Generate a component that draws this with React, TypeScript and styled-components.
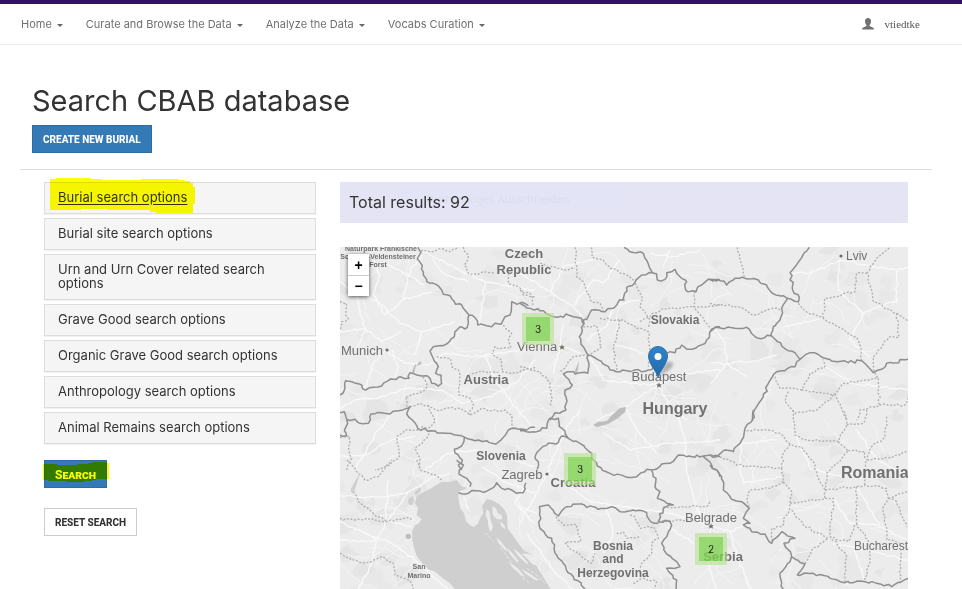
import React from 'react';
import styled, { createGlobalStyle } from 'styled-components';

const sans = `Inter, "Open Sans", "Liberation Sans", sans-serif`;
const buttonFont = `Roboto, "Liberation Sans", sans-serif`;

const GlobalStyle = createGlobalStyle`
  *, *::before, *::after { box-sizing: border-box; }
  html { overflow: hidden; }
  body { margin: 0; background: #fff; color: #333; font-family: ${sans}; }
`;

const Page = styled.div`
  display: flex;
  flex-direction: column;
  height: 100vh;
  overflow: hidden;
`;

const Navbar = styled.nav`
  display: flex;
  align-items: center;
  justify-content: space-between;
  flex: none;
  height: 45px;
  padding: 0 42px 0 21px;
  border-top: 4px solid #321067;
  border-bottom: 1px solid #ebebeb;
`;

const NavGroup = styled.div`
  display: flex;
  gap: 23px;
`;

const NavButton = styled.button`
  display: flex;
  align-items: center;
  gap: 5px;
  padding: 0;
  border: 0;
  background: none;
  color: #707070;
  font: 11px/16px ${sans};
  white-space: nowrap;
`;

const Caret = styled.span`
  border: 3px solid transparent;
  border-top-color: #666;
  border-bottom: 0;
  margin-top: 3px;
`;

const UserLink = styled.a`
  display: flex;
  align-items: center;
  gap: 11px;
  color: #555;
  text-decoration: none;
  font: 11px/16px "Liberation Serif", serif;
`;

const Main = styled.main`
  display: flex;
  flex-direction: column;
  flex: 1;
  min-height: 0;
  padding: 37px 30px 0 20px;
`;

const PageHeader = styled.header`
  flex: none;
  padding: 0 12px 16px;
  border-bottom: 1px solid #ddd;
`;

const Title = styled.h1`
  margin: 0 0 6px;
  font: 400 29px/37px ${sans};
`;

const ActionButton = styled.button<{ $primary?: boolean }>`
  display: block;
  height: 28px;
  padding: 1px 10px 0;
  border: 1px solid ${p => (p.$primary ? '#2e6da4' : '#ccc')};
  background: ${p => (p.$primary ? '#337ab7' : '#fff')};
  color: ${p => (p.$primary ? '#fff' : '#333')};
  font: 800 10px/14px ${buttonFont};
  white-space: nowrap;
`;

const SearchButton = styled(ActionButton)`
  font-size: 12px;
  font-variant: small-caps;
`;

const Columns = styled.div`
  display: grid;
  grid-template-columns: 1fr 2fr;
  flex: 1;
  min-height: 0;
  padding: 12px 12px 0;
`;

const Column = styled.section`
  display: flex;
  flex-direction: column;
  min-width: 0;
  min-height: 0;
  padding: 0 12px;
`;

const OptionList = styled.div`
  display: flex;
  flex-direction: column;
  gap: 4px;
  margin-bottom: 16px;
`;

const OptionPanel = styled.button<{ $active?: boolean }>`
  position: relative;
  padding: 7px 28px 9px 13px;
  border: 1px solid #ddd;
  background: #f5f5f5;
  box-shadow: 0 1px 1px rgba(0, 0, 0, 0.05);
  color: #333;
  font: 13px/14px ${sans};
  text-align: left;
  text-decoration: ${p => (p.$active ? 'underline' : 'none')};
  text-underline-offset: 2px;
`;

const Actions = styled.div`
  display: flex;
  flex-direction: column;
  align-items: flex-start;
  gap: 20px;
`;

const Highlighted = styled.div`
  position: relative;
`;

const Stroke = styled.svg<{ $left: number; $top: number }>`
  position: absolute;
  left: ${p => p.$left}px;
  top: ${p => p.$top}px;
  fill: #ff0;
  mix-blend-mode: multiply;
  pointer-events: none;
`;

const Results = styled.div`
  position: relative;
  flex: none;
  margin-bottom: 24px;
  padding: 10px 9px 11px;
  background: #e5e4f4;
`;

const ResultsText = styled.p`
  position: relative;
  margin: 0;
  font: 16px/20px ${sans};
`;

const FadedLabel = styled.span`
  position: absolute;
  left: 55px;
  top: 6px;
  width: 230px;
  padding-left: 32px;
  background: #e3e4f6;
  color: #dcdcec;
  font: 11px/22px "Noto Sans", sans-serif;
  white-space: nowrap;
`;

const MapFrame = styled.div`
  position: relative;
  flex: 1;
  min-height: 0;
  overflow: hidden;
  background: #ececec;
`;

const MapCanvas = styled.svg`
  display: block;
  width: 100%;
  height: 100%;
`;

const ZoomControl = styled.div`
  position: absolute;
  left: 8px;
  top: 7px;
  display: flex;
  flex-direction: column;
  background: #fff;
  box-shadow: 0 1px 4px rgba(0, 0, 0, 0.65);
`;

const ZoomButton = styled.button`
  width: 21px;
  height: 21px;
  padding: 0;
  border: 0;
  background: none;
  color: #000;
  font: 700 14px/20px "Liberation Sans", sans-serif;
  & + & { border-top: 1px solid #ccc; }
`;

const Cluster = styled.button<{ $x: number; $y: number }>`
  position: absolute;
  left: ${p => p.$x}px;
  top: ${p => p.$y}px;
  width: 32px;
  height: 32px;
  padding: 0;
  border: 4px solid rgba(181, 226, 140, 0.6);
  background: rgba(125, 211, 77, 0.78);
  background-clip: padding-box;
  color: #222;
  font: 10px/24px ${sans};
`;

const Pin = styled.svg`
  position: absolute;
  left: 308px;
  top: 99px;
`;

type Tile = { x: number; y: number; borders: string; regions: string; roads: string };

/* Each tile is drawn at triple resolution from its own origin. */
const tiles: Tile[] = [
  {
    x: 335, y: 175,
    borders: 'M250,216 258,232 247,252 262,272 265,300 285,325 303,328 320,345 325,358 345,362 362,388 375,386 385,400 402,420 420,428 428,450 455,452 470,455 480,445 498,448 510,425 525,420 530,380 545,388 560,382 580,392 M402,420 400,445 390,462 375,455 360,470 358,485 325,512 295,515 285,528 290,540',
    regions: 'M258,228 300,228 325,222 345,230 370,216 M385,216 400,240 388,270 400,295 430,298 445,290 480,293 M520,295 520,325 550,335 565,360 600,365 M505,450 530,475 520,500 528,518 500,520 480,515 470,540 M15,380 35,385 32,420 40,432 20,440 15,465',
    roads: 'M15,320 60,350 130,380 190,440 260,470 360,440 M100,216 135,300 115,360 150,420 205,375 290,350 M270,230 340,270 450,320 600,345 M400,320 330,300 290,250 M15,470 90,460 140,500 200,470 M205,375 220,300 260,240 M60,540 90,460 60,350 M260,470 240,540 M450,320 440,400 430,450 M145,260 200,290 270,330',
  },
  {
    x: 335, y: 340,
    borders: 'M290,45 305,70 310,80 302,100 318,105 320,130 310,138 290,130 285,115 260,108 225,98 222,115 190,112 160,122 140,138 115,142 92,150 80,135 50,125 32,122 30,145 15,165 M15,218 28,215 35,238 60,238 75,250 100,250 108,222 140,218 165,222 190,212 218,205 225,200 215,222 232,240 248,265 290,272 330,280 390,292 430,300 482,312 500,298 520,270 550,268 575,270 600,262 M35,238 38,250 28,272 35,287 15,285 M388,292 380,318 358,328 370,345 382,360 370,375 380,390',
    regions: 'M215,200 212,170 240,162 270,150 275,130 262,110 M225,200 255,190 310,212 350,202 380,208 405,225 440,205 470,212 510,210 530,225 535,265 M280,195 300,245 285,262 255,265 M305,50 345,55 350,80 370,90 375,130 372,165 405,175 415,195 405,225 M475,45 500,60 500,95 540,98 600,82 M400,105 430,95 490,98 M250,270 210,270 185,290 195,345 165,375 120,390 M15,292 45,290 42,330 50,355 35,390 M285,270 275,295 240,325 255,355 250,390',
    roads: 'M150,30 210,70 280,75 330,40 420,50 600,25 M150,30 110,80 90,150 M170,30 190,80 180,110 M15,205 60,180 130,175 215,145 320,150 380,190 470,170 540,130 600,60 M60,390 95,330 130,270 165,225 M270,390 340,340 420,330 600,380 M450,50 480,120 530,190 590,260 M15,350 90,345 170,300 240,290',
  },
  {
    x: 335, y: 460,
    borders: 'M365,0 385,15 372,42 395,55 408,70 405,80 M370,98 400,100 425,92 445,97 465,88 485,68 500,85 530,90 545,100 565,98 572,68',
    regions: 'M15,175 60,180 95,175 155,185 220,172 232,180 M35,0 60,25 90,60 130,50 150,25 170,0 M55,95 70,125 110,155 155,185 M245,0 255,30 300,45 320,60 M15,280 50,300 95,308 140,290 175,310 180,345 225,362 235,387',
    roads: 'M15,105 75,112 150,110 220,95 300,50 345,40 M15,185 80,215 170,250 230,290 290,345 340,387 M160,60 155,130 150,190 125,240 85,215 M220,95 190,140 160,180 230,200 M15,240 125,245 110,310 70,387 M570,68 540,130 600,190 M385,110 400,150 M440,20 500,60 600,100',
  },
  {
    x: 520, y: 240,
    borders: 'M312,22 350,38 370,40 375,55 385,72 397,98 365,105 345,128 320,142 312,180 295,185 280,205 255,215 215,210 190,240 187,270 178,290 190,320 205,345 235,360 270,390 320,392 375,394 400,380 440,340 465,338 485,315 515,328 535,318 560,300 575,268 600,260 M397,98 410,102 412,120 435,118 440,98 465,88 475,105 500,125 497,150 528,155 545,135 560,122 600,118 M0,190 30,205 70,212 100,230 130,232 138,222 160,230 185,235 188,250 M205,345 203,400 165,402 150,395 130,402 157,435 135,450 138,510 105,518 90,540',
    regions: 'M165,22 170,110 190,125 210,180 240,190 250,212 M215,22 215,50 250,60 270,85 310,100 345,125 M345,130 368,175 360,200 390,240 385,262 M240,235 295,240 310,240 350,265 385,275 392,340 385,380 M190,262 230,258 245,320 210,345 M300,240 290,290 280,330 290,390 M360,245 430,205 520,200 600,195 M525,155 520,200 560,250 575,268 M60,70 130,90 165,85 M0,150 35,165 40,200 M0,380 60,395 90,430 95,500 M205,345 160,350 140,375 115,395',
    roads: 'M0,100 90,155 160,200 200,250 M160,200 220,120 250,130 300,60 M90,155 130,80 220,60 M210,350 250,420 340,430 415,435 500,400 600,390 M200,300 260,260 280,200 360,180 M415,435 450,500 500,540 M415,435 300,510 230,540 M120,320 180,340 M390,40 460,50 540,30 M430,80 450,30 M280,310 370,340 M130,250 120,320 100,400',
  },
  {
    x: 520, y: 410,
    borders: 'M0,62 40,65 80,55 82,40 90,25 115,25 118,50 145,85 180,100 215,130 232,168 270,190 315,200 350,200 380,178 395,180 425,162 450,160 475,135 500,140 550,138 600,140 M145,85 125,78 115,98 85,100 50,128 45,140 55,155 50,185 M395,180 408,205 405,230 420,245 412,265 440,280 460,285 430,295 415,335 450,335 455,345 440,380 425,400 440,432 470,455 480,470 440,475 470,510 468,537 M195,537 160,500 130,460 105,430 95,385 60,355 58,290 85,285 115,318 140,290 185,282 235,298 275,290 300,305 340,300 380,308 392,335 415,340 M550,140 575,165 600,200',
    regions: 'M108,320 130,345 170,345 182,395 135,398 165,425 200,450 215,460 225,430 M330,315 345,320 360,355 400,350 415,385 395,400 395,430 365,460 360,475 M290,370 310,365 320,385 360,380 M415,335 480,330 540,335 575,345 M430,290 560,290 570,270 M340,520 370,505 410,515 405,537',
    roads: 'M85,190 150,230 210,275 320,290 450,310 570,345 M470,0 495,100 500,190 530,290 570,345 M180,0 140,50 80,190 0,340 M250,70 330,120 450,100 600,90 M0,290 50,310 M320,0 350,60 410,130 M570,345 560,450 590,537 M20,370 100,480 160,537 M260,290 280,370 250,430 M440,350 520,400',
  },
  {
    x: 710, y: 240,
    borders: 'M298,22 240,98 252,160 268,172 265,187 M0,118 30,122 50,135 75,115 105,115 145,120 170,135 180,152 232,175 265,185 M232,175 215,205 210,240 190,260 185,288 M0,275 15,262 75,265 110,262 145,295 185,288 215,318 235,332 255,338 270,358 300,338 345,355 415,368 455,362 490,398 515,388 530,370 594,358 M270,358 255,380 200,395 175,430 160,470 140,500 125,540',
    regions: 'M82,22 105,115 M0,190 80,200 135,225 190,205 212,210 M265,190 300,222 340,235 400,268 445,300 455,360 M340,235 345,175 435,155 440,100 470,100 490,185 560,220 568,290 540,290 490,350 495,398 505,415 M470,100 500,55 540,22 M560,220 594,245 M195,410 210,445 275,450 300,400 345,380 340,358 M275,450 375,462 400,430 500,415 M235,455 225,485 255,520 320,510 375,462 410,540 M505,415 508,495 450,510 440,540 M508,495 585,495 594,475',
    roads: 'M0,370 50,370 110,410 M50,370 150,360 200,345 M50,370 40,300 15,262 M0,430 50,370 M390,60 300,100 240,98 M390,60 385,150 460,220 560,180 M390,60 560,92 594,80 M560,92 560,190 M220,260 330,235 M460,220 420,300 480,350 M345,380 430,430 594,450',
  },
  {
    x: 710, y: 410,
    borders: 'M130,0 128,30 105,55 95,90 70,125 40,122 20,140 0,135 M0,165 35,200 40,240 65,268 95,275 118,295 100,325 120,340 100,345 125,365 165,372 185,400 215,365 255,385 222,400 245,440 285,462 262,495 310,490 390,515 430,518 465,515 500,520 545,530 594,505 M245,440 240,455 210,490 220,537',
    regions: 'M110,62 175,60 210,70 240,102 275,110 310,155 325,205 345,240 M30,140 80,165 215,175 220,130 240,102 M215,175 220,215 245,245 240,290 215,350 185,355 185,400 M220,215 180,235 120,240 110,270 118,295 M250,0 255,75 290,90 385,95 410,45 400,0 M410,45 460,40 470,0 M385,95 415,122 350,190 345,265 240,280 M415,122 465,125 465,148 M345,240 465,225 530,235 535,265 520,290 525,340 530,390 570,400 570,520 M465,225 470,150 550,140 594,125 M345,265 370,265 360,378 410,440 405,515 M245,300 280,345 355,385 305,420 285,460 M440,230 440,340 415,395 360,380 M440,340 475,390 480,450 465,515 M535,265 560,275 590,350 M535,265 594,245 M530,20 525,80 485,110 470,150',
    roads: 'M95,100 90,160 100,220 215,200 M95,100 200,90 M260,75 300,175 400,200 M0,345 60,365 100,345 M60,365 80,430 120,537 M420,340 500,345 594,390 M370,400 470,420 594,450 M430,420 465,510 M370,265 420,340 M440,230 510,345 M594,200 500,150 440,60',
  },
];

let seed = 23;
const random = () => {
  seed = (seed * 16807) % 2147483647;
  return seed / 2147483647;
};

/* Adds a small natural meander between the given points. */
const meander = (d: string, size: number) =>
  d.split('M').filter(Boolean).map(part => {
    const pts = part.trim().split(/\s+/).map(p => p.split(',').map(Number));
    let out = `M${pts[0][0]} ${pts[0][1]}`;
    for (let i = 1; i < pts.length; i++) {
      const [ax, ay] = pts[i - 1];
      const [bx, by] = pts[i];
      const n = Math.max(1, Math.round(Math.hypot(bx - ax, by - ay) / 11));
      for (let k = 1; k < n; k++) {
        const t = k / n;
        out += `L${(ax + (bx - ax) * t + (random() - 0.5) * size).toFixed(1)} ${(ay + (by - ay) * t + (random() - 0.5) * size).toFixed(1)}`;
      }
      out += `L${bx} ${by}`;
    }
    return out;
  }).join('');

const shapes = tiles.map(t => ({
  ...t,
  borders: meander(t.borders, 9),
  regions: meander(t.regions, 7),
  roads: meander(t.roads, 7),
}));

const terrain = Array.from({ length: 210 }, () => {
  const x = 340 + random() * 568;
  const y = 247 + random() * 342;
  const r = 3 + random() * 9;
  const pts = Array.from({ length: 9 }, (_, i) => {
    const a = (i / 9) * Math.PI * 2;
    const q = r * (0.4 + random() * 0.9);
    return `${(x + Math.cos(a) * q * 1.3).toFixed(1)},${(y + Math.sin(a) * q).toFixed(1)}`;
  });
  return pts.join(' ');
});

const lanes = Array.from({ length: 150 }, () => {
  let x = 340 + random() * 568;
  let y = 247 + random() * 342;
  let a = random() * Math.PI * 2;
  let d = `M${x.toFixed(1)} ${y.toFixed(1)}`;
  for (let i = 0; i < 8; i++) {
    a += (random() - 0.5) * 1.1;
    x += Math.cos(a) * 6;
    y += Math.sin(a) * 6;
    d += `L${x.toFixed(1)} ${y.toFixed(1)}`;
  }
  return d;
}).join('');

type Label = { x: number; y: number; size: number; text: string; bold?: boolean; start?: boolean };

const labels: Label[] = [
  { x: 381, y: 251, size: 7, text: 'Naturpark Fränkische', bold: true },
  { x: 378, y: 259, size: 7, text: 'Schweiz-Veldensteiner', bold: true },
  { x: 378, y: 267, size: 7, text: 'Forst', bold: true },
  { x: 524, y: 258, size: 13, text: 'Czech', bold: true },
  { x: 524, y: 274, size: 13, text: 'Republic', bold: true },
  { x: 675, y: 324, size: 12, text: 'Slovakia', bold: true },
  { x: 341, y: 355, size: 13, text: 'Munich', start: true },
  { x: 486, y: 384, size: 13, text: 'Austria', bold: true },
  { x: 537, y: 351, size: 13, text: 'Vienna' },
  { x: 659, y: 381, size: 13, text: 'Budapest' },
  { x: 675, y: 414, size: 16, text: 'Hungary', bold: true },
  { x: 501, y: 460, size: 12, text: 'Slovenia', bold: true },
  { x: 522, y: 479, size: 13, text: 'Zagreb' },
  { x: 573, y: 487, size: 13, text: 'Croatia', bold: true },
  { x: 613, y: 550, size: 12, text: 'Bosnia', bold: true },
  { x: 613, y: 563, size: 12, text: 'and', bold: true },
  { x: 613, y: 577, size: 12, text: 'Herzegovina', bold: true },
  { x: 711, y: 522, size: 13, text: 'Belgrade' },
  { x: 723, y: 561, size: 13, text: 'Serbia', bold: true },
  { x: 841, y: 478, size: 16, text: 'Romania', bold: true, start: true },
  { x: 854, y: 550, size: 12, text: 'Bucharest', start: true },
  { x: 846, y: 260, size: 12, text: 'Lviv', start: true },
  { x: 419, y: 569, size: 7, text: 'San', bold: true },
  { x: 419, y: 578, size: 7, text: 'Marino', bold: true },
];

const capitals = ['562,347', '659,385', '711,526'];

const MapArtwork = () => (
  <MapCanvas viewBox="340 247 568 342" preserveAspectRatio="xMinYMin slice" role="img" aria-label="Map of Central Europe">
    <rect x="340" y="247" width="568" height="342" fill="#ececec" />
    {terrain.map((points, i) => <polygon key={i} points={points} fill={i % 3 ? '#e7e7e7' : '#e3e3e3'} opacity="0.75" />)}
    <path d={lanes} fill="none" stroke="#f5f5f5" strokeWidth="1" />
    {shapes.map(t => (
      <g key={`${t.x}-${t.y}`} transform={`translate(${t.x} ${t.y}) scale(0.33333)`} fill="none" strokeLinejoin="round">
        <path d={t.roads} stroke="#f9f9f9" strokeWidth="4" />
        <path d={t.regions} stroke="#b0b0b0" strokeWidth="4" strokeDasharray="6 5" />
      </g>
    ))}
    <g transform="translate(335 460) scale(0.33333)">
      <path fill="#cfcfcf" d="M245 108L262 98L290 84L320 65L345 66L365 60L378 78L398 84L370 95L371 120L376 145L387 160L394 185L405 195L416 201L428 192L435 175L445 160L441 138L455 118L470 120L492 132L507 148L516 165L518 205L535 228L550 250L568 272L590 284L598 310L618 340L636 370L655 400H370L345 370L320 352L300 335L280 328L262 310L245 288L237 262L232 240L231 214L240 196L252 190L260 178L245 165L249 145L240 130Z" />
      <path fill="#cfcfcf" d="M75 38L66 70L59 90L56 101L48 96L48 86L54 74ZM232 108L238 120L231 136L222 134L218 120ZM238 98L252 84L260 82L256 94L243 106Z" />
      <circle cx="220" cy="229" r="8" fill="#bdbdbd" />
      <path fill="#ececec" d="M455 148L463 154L466 178L474 200L468 216L461 205L458 180L452 166ZM472 138L484 146L488 160L500 166L502 178L486 178L474 166ZM494 184L508 195L512 208L500 200ZM515 262L536 284L551 305L546 307L525 283ZM535 264L560 286L580 310L575 312L548 286ZM484 232L500 247L520 275L510 270L490 248ZM520 305L548 325L570 350L561 347L534 324ZM560 326L590 345L612 360L600 360L570 340ZM560 280L590 284L606 312L596 316Z" />
      <path fill="none" stroke="#e9e9e9" strokeWidth="3" strokeDasharray="10 6" d="M450 218L475 244M496 262L528 305L560 350L585 370M575 325L610 350L630 370" />
    </g>
    <path fill="#bdbdbd" d="M593 425L598 422L607 421L612 415L620 408L626 407L625 412L618 418L608 424L597 427ZM574 373L579 361L578 370L576 375ZM412 372L415 364L416 365L414 374ZM416 366L420 361L422 364Z" />
    {shapes.map(t => (
      <path key={`${t.x}-${t.y}`} d={t.borders} transform={`translate(${t.x} ${t.y}) scale(0.33333)`} fill="none" stroke="#8f8f8f" strokeWidth="4.500" strokeLinejoin="round" />
    ))}
    <g fill="#6f6f65">
      <circle cx="387" cy="350" r="1.6" />
      <circle cx="547" cy="474" r="1.6" />
      <circle cx="841" cy="256" r="1.6" />
      {capitals.map(c => (
        <path key={c} transform={`translate(${c}) scale(0.7) translate(0 -4)`} d="M0 0L1 3H4L2 5L3 8L0 6L-3 8L-2 5L-4 3H-1Z" />
      ))}
    </g>
    {labels.map(l => (
      <text
        key={l.text}
        x={l.x}
        y={l.y}
        fontSize={l.size}
        fontWeight={l.bold ? 700 : 400}
        textAnchor={l.start ? 'start' : 'middle'}
        fontFamily="'Liberation Sans', Arial, sans-serif"
        fill="#707070"
        stroke="#ededed"
        strokeWidth="2"
        strokeOpacity="0.6"
        paintOrder="stroke"
      >
        {l.text}
      </text>
    ))}
  </MapCanvas>
);

const options = [
  'Burial search options',
  'Burial site search options',
  'Urn and Urn Cover related search options',
  'Grave Good search options',
  'Organic Grave Good search options',
  'Anthropology search options',
  'Animal Remains search options',
];

const menus = ['Home', 'Curate and Browse the Data', 'Analyze the Data', 'Vocabs Curation'];

const clusters = [
  { x: 182, y: 66, count: 3 },
  { x: 224, y: 206, count: 3 },
  { x: 355, y: 286, count: 2 },
];

export default function App() {
  return (
    <Page>
      <GlobalStyle />
      <Navbar>
        <NavGroup>
          {menus.map(m => <NavButton key={m} aria-haspopup="menu">{m}<Caret /></NavButton>)}
        </NavGroup>
        <UserLink href="#">
          <svg width="12" height="12" viewBox="0 0 12 12" fill="#707070" aria-hidden="true">
            <path d="M6 0C4 0 3 1.300 3 3.200C3 5 3.700 6.300 4.500 7V8L1.200 9.400Q0 10 0 11.500H12Q12 10 10.800 9.400L7.500 8V7C8.300 6.300 9 5 9 3.200C9 1.300 8 0 6 0Z" />
          </svg>
          vtiedtke
        </UserLink>
      </Navbar>
      <Main>
        <PageHeader>
          <Title>Search CBAB database</Title>
          <ActionButton $primary>CREATE NEW BURIAL</ActionButton>
        </PageHeader>
        <Columns>
          <Column>
            <OptionList>
              {options.map((o, i) => (
                <OptionPanel key={o} $active={i === 0}>
                  {o}
                  {i === 0 && (
                    <Stroke $left={5} $top={-6} width="146" height="37" aria-hidden="true">
                      <path d="M6 1H40V2H52V3H91V2H129V3H135V4H140V6H143V10H145V27H143V36H106V35H100V33H57V32H31V33H0V18H1V17H0V2H6Z" />
                    </Stroke>
                  )}
                </OptionPanel>
              ))}
            </OptionList>
            <Actions>
              <Highlighted>
                <SearchButton $primary>Search</SearchButton>
                <Stroke $left={-1} $top={2} width="67" height="20" aria-hidden="true">
                  <path d="M0 2H14V3H34V2H45V1H49V0H63V1H66V17H53V18H49V19H41V20H23V19H5V18H0Z" />
                </Stroke>
              </Highlighted>
              <ActionButton>RESET SEARCH</ActionButton>
            </Actions>
          </Column>
          <Column>
            <Results>
              <FadedLabel aria-hidden="true">Rechteckiges Ausschneiden</FadedLabel>
              <ResultsText>Total results: 92</ResultsText>
            </Results>
            <MapFrame>
              <MapArtwork />
              {clusters.map(c => <Cluster key={`${c.x}`} $x={c.x} $y={c.y}>{c.count}</Cluster>)}
              <Pin width="34" height="32" viewBox="0 0 34 32" role="img" aria-label="Burial near Budapest">
                <defs>
                  <linearGradient id="pin" x1="0" y1="0" x2="0" y2="1">
                    <stop offset="0" stopColor="#2f85ca" />
                    <stop offset="1" stopColor="#2168a8" />
                  </linearGradient>
                  <filter id="soft"><feGaussianBlur stdDeviation="1.5" /></filter>
                </defs>
                <path d="M10 31L17 18Q21 14 25 17Q26 20 21 24Z" fill="#000" opacity="0.25" filter="url(#soft)" />
                <path d="M10 31C8 25 .5 17 .5 10A9.500 9.500 0 0 1 19.500 10C19.500 17 12 25 10 31Z" fill="url(#pin)" stroke="#2b72ad" />
                <circle cx="10" cy="10.500" r="3.500" fill="#fff" />
              </Pin>
              <ZoomControl>
                <ZoomButton aria-label="Zoom in">+</ZoomButton>
                <ZoomButton aria-label="Zoom out">−</ZoomButton>
              </ZoomControl>
            </MapFrame>
          </Column>
        </Columns>
      </Main>
    </Page>
  );
}
